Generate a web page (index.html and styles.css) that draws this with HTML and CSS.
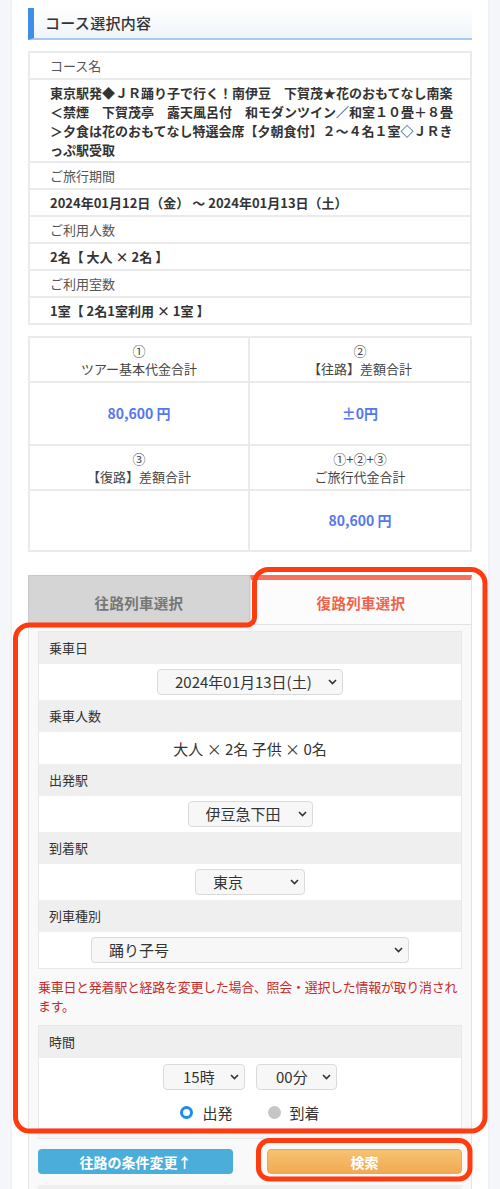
FILE: index.html
```html
<!DOCTYPE html>
<html lang="ja">
<head>
<meta charset="utf-8">
<title>コース選択内容</title>
<link rel="stylesheet" href="styles.css">
</head>
<body>
<div class="page">
  <h2 class="sec-title">コース選択内容</h2>

  <div class="info">
    <div class="info-row label">コース名</div>
    <div class="info-row value course">東京駅発◆ＪＲ踊り子で行く！南伊豆　下賀茂★花のおもてなし南楽<br>＜禁煙　下賀茂亭　露天風呂付　和モダンツイン／和室１０畳＋８畳<br>＞夕食は花のおもてなし特選会席【夕朝食付】２～４名１室◇ＪＲき<br>っぷ駅受取</div>
    <div class="info-row label">ご旅行期間</div>
    <div class="info-row value">2024年01月12日（金） ～ 2024年01月13日（土）</div>
    <div class="info-row label">ご利用人数</div>
    <div class="info-row value">2名【 大人 × 2名 】</div>
    <div class="info-row label">ご利用室数</div>
    <div class="info-row value">1室【 2名1室利用 × 1室 】</div>
  </div>

  <div class="price">
    <div class="cell head"><span>①</span><span>ツアー基本代金合計</span></div>
    <div class="cell head"><span>②</span><span>【往路】差額合計</span></div>
    <div class="cell amount">80,600 円</div>
    <div class="cell amount">±0円</div>
    <div class="cell head"><span>③</span><span>【復路】差額合計</span></div>
    <div class="cell head"><span>①+②+③</span><span>ご旅行代金合計</span></div>
    <div class="cell amount last"></div>
    <div class="cell amount last">80,600 円</div>
  </div>

  <div class="tabs">
    <div class="tab tab-off">往路列車選択</div>
    <div class="tab tab-on">復路列車選択</div>
  </div>

  <div class="panel">
    <div class="form">
      <div class="f-label">乗車日</div>
      <div class="f-row first">
        <span class="sel w-date"><select><option>2024年01月13日(土)</option></select><svg width="9" height="6" viewBox="0 0 9 6"><path d="M1 1 L4.5 4.5 L8 1" fill="none" stroke="#333" stroke-width="1.6"/></svg></span>
      </div>
      <div class="f-label">乗車人数</div>
      <div class="f-row text">大人 × 2名 子供 × 0名</div>
      <div class="f-label">出発駅</div>
      <div class="f-row">
        <span class="sel w-dep"><select><option>伊豆急下田</option></select><svg width="9" height="6" viewBox="0 0 9 6"><path d="M1 1 L4.5 4.5 L8 1" fill="none" stroke="#333" stroke-width="1.6"/></svg></span>
      </div>
      <div class="f-label">到着駅</div>
      <div class="f-row">
        <span class="sel w-arr"><select><option>東京</option></select><svg width="9" height="6" viewBox="0 0 9 6"><path d="M1 1 L4.5 4.5 L8 1" fill="none" stroke="#333" stroke-width="1.6"/></svg></span>
      </div>
      <div class="f-label">列車種別</div>
      <div class="f-row">
        <span class="sel w-train"><select><option>踊り子号</option></select><svg width="9" height="6" viewBox="0 0 9 6"><path d="M1 1 L4.5 4.5 L8 1" fill="none" stroke="#333" stroke-width="1.6"/></svg></span>
      </div>
    </div>

    <p class="note">乗車日と発着駅と経路を変更した場合、照会・選択した情報が取り消され<br>ます。</p>

    <div class="form">
      <div class="f-label">時間</div>
      <div class="f-row time">
        <span class="sel w-hour"><select><option>15時</option></select><svg width="9" height="6" viewBox="0 0 9 6"><path d="M1 1 L4.5 4.5 L8 1" fill="none" stroke="#333" stroke-width="1.6"/></svg></span>
        <span class="sel w-min"><select><option>00分</option></select><svg width="9" height="6" viewBox="0 0 9 6"><path d="M1 1 L4.5 4.5 L8 1" fill="none" stroke="#333" stroke-width="1.6"/></svg></span>
      </div>
      <div class="f-row radios">
        <label class="radio on"><i></i>出発</label>
        <label class="radio off"><i></i>到着</label>
      </div>
      <div class="f-foot"></div>
    </div>

    <div class="btns">
      <button class="btn btn-blue">往路の条件変更↑</button>
      <button class="btn btn-orange">検索</button>
    </div>

    <div class="next"></div>
  </div>
</div>

<svg class="marks" width="500" height="1189" viewBox="0 0 500 1189">
  <path d="M15.5 1117 V639 A14 14 0 0 1 29.5 625 H247 A7.5 7.5 0 0 0 254.5 617.5 V583.5 A14 14 0 0 1 268.5 569.5 H471 A14 14 0 0 1 485 583.5 V1117 A14 14 0 0 1 471 1131 H29.5 A14 14 0 0 1 15.5 1117 Z" fill="none" stroke="#ff3b10" stroke-width="5"/>
  <rect x="258.5" y="1140.5" width="211.5" height="38.5" rx="11" fill="none" stroke="#ff3b10" stroke-width="5"/>
</svg>
</body>
</html>
```

FILE: styles.css
```css
* {
  box-sizing: border-box;
  margin: 0;
  padding: 0;
}

html, body {
  width: 500px;
}

body {
  position: relative;
  background: #f5f6fa;
  font-family: "Noto Sans CJK JP", "Noto Sans", sans-serif;
  color: #333;
  font-size: 13px;
  line-height: 19px;
  overflow: hidden;
  height: 1189px;
}

.page {
  margin: 0 12px;
  width: 476px;
  min-height: 1189px;
  background: #fff;
  padding: 8px 16px 0;
  box-shadow: 0 0 3px rgba(0, 0, 0, 0.07);
}

.sec-title {
  height: 32px;
  border-left: 6px solid #3d8ee8;
  border-bottom: 2px solid #a9c9f2;
  background: linear-gradient(#ffffff, #eef4fb);
  font-size: 15px;
  font-weight: 500;
  line-height: 30px;
  padding-left: 11px;
  color: #333;
  letter-spacing: 0.3px;
}

/* info table */
.info {
  margin-top: 11px;
  border: 2px solid #ebebeb;
}

.info-row {
  height: 27px;
  border-top: 2px solid #ebebeb;
  padding: 0 10px 0 20px;
  line-height: 25px;
}

.info-row:first-child {
  border-top: 0;
  height: 25px;
}

.info-row.label {
  color: #555;
}

.info-row.value {
  font-weight: 700;
  color: #333;
}

.info-row.course {
  height: 83px;
  padding-top: 3px;
  line-height: 19px;
}

/* price table */
.price {
  margin-top: 11px;
  border: 2px solid #ebebeb;
  border-bottom: 0;
  display: grid;
  grid-template-columns: 1fr 1fr;
}

.price .cell {
  border-bottom: 2px solid #ebebeb;
  text-align: center;
  color: #444;
}

.price .cell:nth-child(odd) {
  border-right: 2px solid #ebebeb;
}

.price .head {
  height: 45px;
  display: flex;
  flex-direction: column;
  justify-content: center;
  line-height: 18px;
}

.price .amount {
  height: 63px;
  display: flex;
  align-items: center;
  justify-content: center;
  color: #5677ec;
  font-weight: 700;
  font-size: 14px;
}

.price .amount.last {
  height: 61px;
}

/* tabs */
.tabs {
  margin-top: 23px;
  display: flex;
  height: 50px;
}

.tab {
  flex: 1;
  display: flex;
  align-items: center;
  justify-content: center;
  font-size: 14.5px;
  font-weight: 700;
  letter-spacing: 0.3px;
}

.tab-off {
  background: #d5d5d5;
  border: 1px solid #c8c8c8;
  padding-top: 4px;
  color: #777;
}

.tab-on {
  background: #fcfcfc;
  border: 1px solid #e2e2e2;
  border-top: 5px solid #f3735f;
  color: #f0624c;
}

/* panel */
.panel {
  background: #f9f9f9;
  border-left: 1px solid #e4e4e4;
  border-right: 1px solid #e4e4e4;
  padding: 6px 9px 0;
}

.form {
  border: 1px solid #e8e8e8;
  background: #fff;
}

.f-label {
  height: 32px;
  background: #efefef;
  padding-left: 10px;
  line-height: 32px;
  font-size: 13px;
  color: #333;
}

.f-row {
  height: 36px;
  display: flex;
  align-items: center;
  justify-content: center;
  background: #fff;
}

.f-row.text {
  height: 32px;
  font-size: 15px;
}

.f-row.time {
  height: 38px;
  gap: 11px;
}

.f-row.radios {
  height: 32px;
  gap: 35px;
}

.f-foot {
  height: 10px;
  background: #f6f6f6;
  border-top: 1px solid #e8e8e8;
}

.sel {
  position: relative;
  display: inline-block;
  height: 26px;
}

.sel select {
  appearance: none;
  -webkit-appearance: none;
  width: 100%;
  height: 26px;
  border: 1px solid #dadada;
  border-radius: 4px;
  background: #f7f7f7;
  font-family: inherit;
  font-size: 15px;
  line-height: 24px;
  color: #333;
  padding-left: 17px;
  outline: none;
}

.sel svg {
  position: absolute;
  right: 6px;
  top: 10px;
}

.w-date { width: 186px; }
.w-dep { width: 125px; }
.w-arr { width: 110px; }
.w-train { width: 318px; }
.w-hour { width: 82px; }
.w-min { width: 81px; }

.w-hour select,
.w-min select {
  padding-left: 19px;
}

.note {
  color: #c62b2b;
  font-size: 13px;
  line-height: 19px;
  letter-spacing: -0.3px;
  white-space: nowrap;
  padding: 8px 0 10px;
}

.radio {
  display: inline-flex;
  align-items: center;
  gap: 9px;
  font-size: 15px;
  color: #333;
}

.radio i {
  display: block;
  width: 13px;
  height: 13px;
  border-radius: 50%;
}

.radio.on i {
  border: 3.5px solid #1d8cf2;
  background: #fff;
}

.radio.off i {
  background: #c6c6c6;
}

/* buttons */
.btns {
  display: flex;
  justify-content: space-between;
  margin-top: 10px;
}

.btn {
  width: 195px;
  height: 25px;
  border-radius: 4px;
  border: 0;
  color: #fff;
  font-family: inherit;
  font-weight: 700;
  font-size: 14px;
  display: flex;
  align-items: center;
  justify-content: center;
}

.btn-blue {
  background: #4badda;
}

.btn-orange {
  background: linear-gradient(#f6c271, #f1aa52);
  border: 1px solid #eaa856;
}

.next {
  margin-top: 11px;
  height: 30px;
  background: #efefef;
}

.marks {
  position: absolute;
  top: 0;
  left: 0;
  pointer-events: none;
}
```
